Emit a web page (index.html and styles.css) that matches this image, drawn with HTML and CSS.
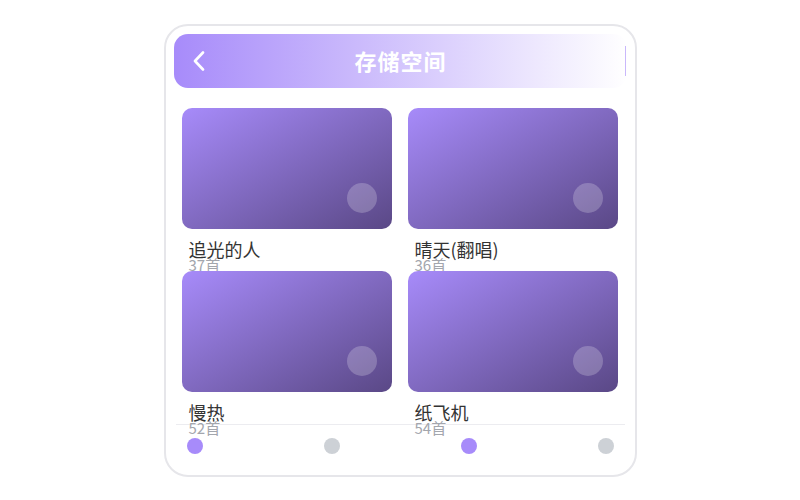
FILE: index.html
```html
<!DOCTYPE html>
<html lang="zh-CN">
<head>
    <meta charset="UTF-8">
    <meta name="viewport" content="width=device-width, initial-scale=1.0">
    <title>存储空间</title>
    <link rel="stylesheet" href="styles.css">
</head>
<body>
    <div class="phone">
        <div class="header">
            <span class="back">
                <svg width="12" height="20" viewBox="0 0 12 20">
                    <polyline points="10,1.5 2,10 10,18.5" fill="none" stroke="#fff" stroke-width="2.6" stroke-linecap="round" stroke-linejoin="round"/>
                </svg>
            </span>
            <h1 class="title">存储空间</h1>
            <span class="header-edge"></span>
        </div>

        <div class="content">
            <div class="grid">
                <div class="album">
                    <div class="cover"><span class="play"></span></div>
                    <div class="album-name">追光的人</div>
                    <div class="album-count">37首</div>
                </div>
                <div class="album">
                    <div class="cover"><span class="play"></span></div>
                    <div class="album-name">晴天(翻唱)</div>
                    <div class="album-count">36首</div>
                </div>
                <div class="album">
                    <div class="cover"><span class="play"></span></div>
                    <div class="album-name">慢热</div>
                    <div class="album-count">52首</div>
                </div>
                <div class="album">
                    <div class="cover"><span class="play"></span></div>
                    <div class="album-name">纸飞机</div>
                    <div class="album-count">54首</div>
                </div>
            </div>
        </div>

        <div class="tabbar">
            <span class="dot active"></span>
            <span class="dot"></span>
            <span class="dot active"></span>
            <span class="dot"></span>
        </div>
    </div>
</body>
</html>
```

FILE: styles.css
```css
html, body {
    margin: 0;
    padding: 0;
    background: #fff;
}
body {
    font-family: "Noto Sans CJK SC", "Noto Sans", sans-serif;
    height: 500px;
    display: flex;
    align-items: center;
    justify-content: center;
}
.phone {
    box-sizing: border-box;
    width: 473px;
    height: 453px;
    border: 2px solid #e6e6ea;
    border-radius: 24px;
    padding: 8px;
    background: #fff;
}
.header {
    height: 54px;
    border-radius: 14px;
    background: linear-gradient(to right, #a78bfa, #fff);
    display: grid;
    grid-template-columns: 1fr auto 1fr;
    align-items: center;
}
.back {
    justify-self: start;
    margin-left: 19px;
    display: flex;
    align-items: center;
}
.title {
    margin: 0;
    font-size: 22px;
    font-weight: bold;
    color: #fff;
    letter-spacing: 1px;
    margin-left: 1px;
    margin-top: -2px;
}
.header-edge {
    justify-self: end;
    width: 1px;
    height: 30px;
    background: #c9b8fb;
    margin-right: 1px;
}
.content {
    height: 336px;
    box-sizing: border-box;
    padding: 20px 9px 0 8px;
}
.grid {
    display: grid;
    grid-template-columns: 1fr 1fr;
    column-gap: 16px;
}
.cover {
    height: 121px;
    border-radius: 10px;
    background: linear-gradient(to bottom right, #a78bfa, #5a4886);
    display: flex;
    align-items: flex-end;
    justify-content: flex-end;
    padding: 0 15px 16px 0;
    box-sizing: border-box;
}
.play {
    width: 30px;
    height: 30px;
    border-radius: 50%;
    background: rgba(255, 255, 255, 0.22);
}
.album-name {
    margin-top: 10px;
    padding-left: 7px;
    font-size: 18px;
    line-height: 20px;
    color: #333;
}
.album-count {
    padding-left: 7px;
    font-size: 15px;
    line-height: 12px;
    height: 12px;
    color: #a3a6ad;
}
.tabbar {
    margin: 0 2px;
    border-top: 1px solid #ececf0;
    padding: 13px 11px 0 11px;
    display: flex;
    justify-content: space-between;
}
.dot {
    width: 16px;
    height: 16px;
    border-radius: 50%;
    background: #cdd1d6;
}
.dot.active {
    background: #a78bfa;
}
```
